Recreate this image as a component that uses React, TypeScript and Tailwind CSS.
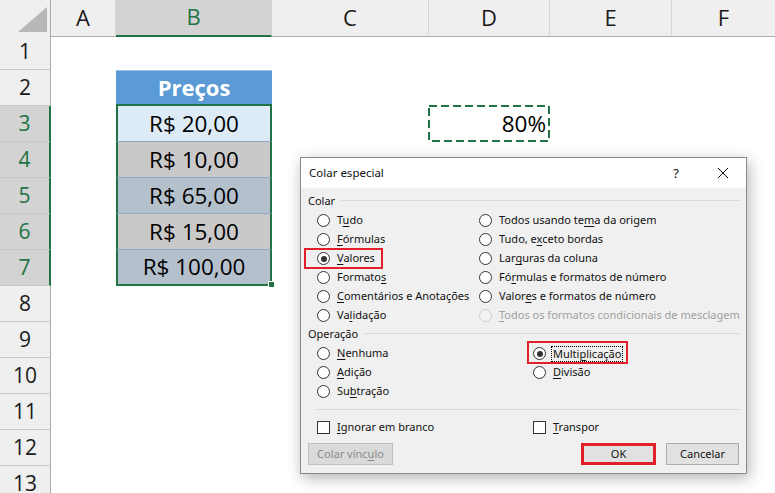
import React from "react";

const GREEN = "#217346";
const RED = "#e0202a";

const cols = ["A", "B", "C", "D", "E", "F"];
const gridCols = "grid grid-cols-[51px_65px_156px_157px_121px_122px_104px]";

const prices: Record<number, { text: string; bg: string }> = {
  3: { text: "R$ 20,00", bg: "bg-[#ddebf7]" },
  4: { text: "R$ 10,00", bg: "bg-[#c9c9c9]" },
  5: { text: "R$ 65,00", bg: "bg-[#b5c0cd]" },
  6: { text: "R$ 15,00", bg: "bg-[#c9c9c9]" },
  7: { text: "R$ 100,00", bg: "bg-[#b5c0cd]" },
};

function Acc({ t, k }: { t: string; k: number }) {
  return (
    <>
      {t.slice(0, k)}
      <span className="underline decoration-1 underline-offset-[2px]">{t[k]}</span>
      {t.slice(k + 1)}
    </>
  );
}

function Radio({ checked = false, disabled = false }: { checked?: boolean; disabled?: boolean }) {
  return (
    <span
      className={
        "w-[13px] h-[13px] rounded-full border flex items-center justify-center shrink-0 " +
        (disabled ? "border-[#cdcdcd] bg-[#f4f4f4]" : "border-[#333333] bg-white")
      }
    >
      {checked && <span className="w-[6px] h-[6px] rounded-full bg-[#333333]" />}
    </span>
  );
}

function Opt({
  t,
  k,
  checked,
  disabled,
}: {
  t: string;
  k: number;
  checked?: boolean;
  disabled?: boolean;
}) {
  return (
    <div className="flex items-center h-[19px]">
      <Radio checked={checked} disabled={disabled} />
      <span className={"ml-[7px] whitespace-nowrap " + (disabled ? "text-[#a0a0a0]" : "")}>
        <Acc t={t} k={k} />
      </span>
    </div>
  );
}

function Check({ t, k }: { t: string; k: number }) {
  return (
    <div className="flex items-center h-[19px]">
      <span className="w-[13px] h-[13px] border border-[#333333] bg-white shrink-0" />
      <span className="ml-[7px] whitespace-nowrap">
        <Acc t={t} k={k} />
      </span>
    </div>
  );
}

function GroupTitle({ label }: { label: string }) {
  return (
    <div className="flex items-center h-[15px] leading-[15px]">
      <span>{label}</span>
      <span className="ml-[6px] flex-1 h-px bg-[#dadada]" />
    </div>
  );
}

function PasteSpecialDialog() {
  return (
    <div className="absolute left-[300px] top-[157px] w-[447px] h-[317px] border border-[#8a8a8a] bg-[#f0f0f0] shadow-[2px_4px_14px_rgba(0,0,0,0.3)] font-['Noto_Sans',sans-serif] text-[11px] text-[#111]">
      {/* title bar */}
      <div className="h-[30px] bg-white flex items-center pl-[8px]">
        <span className="text-[11.5px]">Colar especial</span>
        <span className="ml-auto mr-[38px] text-[13px] leading-none">?</span>
        <svg width="12" height="12" viewBox="0 0 12 12" className="mr-[17px]">
          <path d="M1 1 L11 11 M11 1 L1 11" stroke="#111" strokeWidth="1" fill="none" />
        </svg>
      </div>

      <div className="pl-[7px] pr-[6px] pt-[5px]">
        <GroupTitle label="Colar" />
        <div className="mt-[3px] ml-[9px] grid grid-cols-[162px_1fr]">
          <Opt t="Tudo" k={1} />
          <Opt t="Todos usando tema da origem" k={15} />
          <Opt t="Fórmulas" k={0} />
          <Opt t="Tudo, exceto bordas" k={7} />
          <div className="relative">
            <Opt t="Valores" k={0} checked />
            <span className="absolute left-[-13px] top-[-1px] w-[79px] h-[21px] border-2 border-[#e0202a]" />
          </div>
          <Opt t="Larguras da coluna" k={3} />
          <Opt t="Formatos" k={7} />
          <Opt t="Fórmulas e formatos de número" k={2} />
          <Opt t="Comentários e Anotações" k={0} />
          <Opt t="Valores e formatos de número" k={5} />
          <Opt t="Validação" k={2} />
          <Opt t="Todos os formatos condicionais de mesclagem" k={0} disabled />
        </div>

        <div className="mt-[1px]">
          <GroupTitle label="Operação" />
        </div>
        <div className="mt-[3px] ml-[9px] grid grid-cols-[216px_1fr]">
          <Opt t="Nenhuma" k={0} />
          <div className="relative">
            <div className="flex items-center h-[19px]">
              <Radio checked />
              <span className="ml-[5px] px-[1px] border border-dotted border-black leading-[14px] whitespace-nowrap">
                <Acc t="Multiplicação" k={5} />
              </span>
            </div>
            <span className="absolute left-[-6px] top-[-3px] w-[101px] h-[23px] border-2 border-[#e0202a]" />
          </div>
          <Opt t="Adição" k={0} />
          <Opt t="Divisão" k={0} />
          <Opt t="Subtração" k={2} />
          <div />
        </div>

        <div className="mt-[8px] ml-[8px] h-px bg-[#dadada]" />

        <div className="mt-[8px] ml-[9px] grid grid-cols-[216px_1fr]">
          <Check t="Ignorar em branco" k={0} />
          <Check t="Transpor" k={0} />
        </div>

        <div className="mt-[6px] flex items-center">
          <div className="w-[85px] h-[22px] border border-[#bfbfbf] bg-[#dadada] text-[#8a8a8a] flex items-center justify-center">
            <Acc t="Colar vínculo" k={10} />
          </div>
          <div
            className="ml-auto w-[75px] h-[22px] border-[3px] bg-[#e1e1e1] flex items-center justify-center"
            style={{ borderColor: RED }}
          >
            OK
          </div>
          <div className="ml-[10px] mr-[1px] w-[73px] h-[22px] border border-[#adadad] bg-[#e1e1e1] flex items-center justify-center">
            Cancelar
          </div>
        </div>
      </div>
    </div>
  );
}

function ColumnHeader() {
  return (
    <div className={gridCols + " h-[34px]"}>
      <div className="bg-[#efefef] border-r border-b border-[#ababab] flex items-end justify-end pr-[3px] pb-[4px]">
        <svg width="29" height="25" viewBox="0 0 29 25">
          <polygon points="29,0 29,25 0,25" fill="#b7b7b7" />
        </svg>
      </div>
      {cols.map((c) => {
        const sel = c === "B";
        return (
          <div
            key={c}
            className={
              "flex items-center justify-center pb-[2px] text-[22px] border-r border-[#d5d5d5] " +
              (sel
                ? "bg-[#d3d3d3] text-[#217346] border-b-2 border-b-[#217346]"
                : "bg-[#efefef] text-[#1a1a1a] border-b border-b-[#ababab]")
            }
          >
            {c}
          </div>
        );
      })}
    </div>
  );
}

function Row({ n }: { n: number }) {
  const sel = n >= 3 && n <= 7;
  const price = prices[n];
  return (
    <div className={gridCols + " h-[36px]"}>
      <div
        className={
          "flex items-center justify-center text-[21px] border-b border-b-[#c8c8c8] " +
          (sel
            ? "bg-[#d3d3d3] text-[#217346] border-r-2 border-r-[#217346]"
            : "bg-[#efefef] text-[#1a1a1a] border-r border-r-[#ababab]")
        }
      >
        {n}
      </div>
      <div />
      {n === 2 ? (
        <div className="bg-[#5b9bd5] text-white font-bold text-[22px] flex items-center justify-center border-b-2 border-b-[#217346] border-t border-t-[#9bc2e6]">
          Preços
        </div>
      ) : price ? (
        <div
          className={
            "relative flex items-center justify-center text-[22.5px] text-black border-x-2 border-x-[#217346] " +
            price.bg +
            (n === 7 ? " border-b-2 border-b-[#217346]" : " border-b border-b-[#8fa6c4]")
          }
        >
          {price.text}
          {n === 7 && (
            <span className="absolute right-[-5px] bottom-[-4px] w-[7px] h-[7px] bg-[#217346] border border-white z-10" />
          )}
        </div>
      ) : (
        <div />
      )}
      <div />
      {n === 3 ? (
        <div className="relative flex items-center justify-end pr-[4px] text-[22.5px] text-black">
          80%
          <svg className="absolute left-[-1px] top-[-1px]" width="122" height="37" viewBox="0 0 122 37">
            <rect
              x="1"
              y="1"
              width="120"
              height="35"
              fill="none"
              stroke={GREEN}
              strokeWidth="2"
              strokeDasharray="8 4"
            />
          </svg>
        </div>
      ) : (
        <div />
      )}
      <div />
      <div />
    </div>
  );
}

export default function App() {
  const rows = Array.from({ length: 13 }, (_, i) => i + 1);
  return (
    <div className="relative w-[775px] h-[493px] overflow-hidden bg-white font-['Open_Sans',sans-serif]">
      <ColumnHeader />
      {rows.map((n) => (
        <Row key={n} n={n} />
      ))}
      <PasteSpecialDialog />
    </div>
  );
}
